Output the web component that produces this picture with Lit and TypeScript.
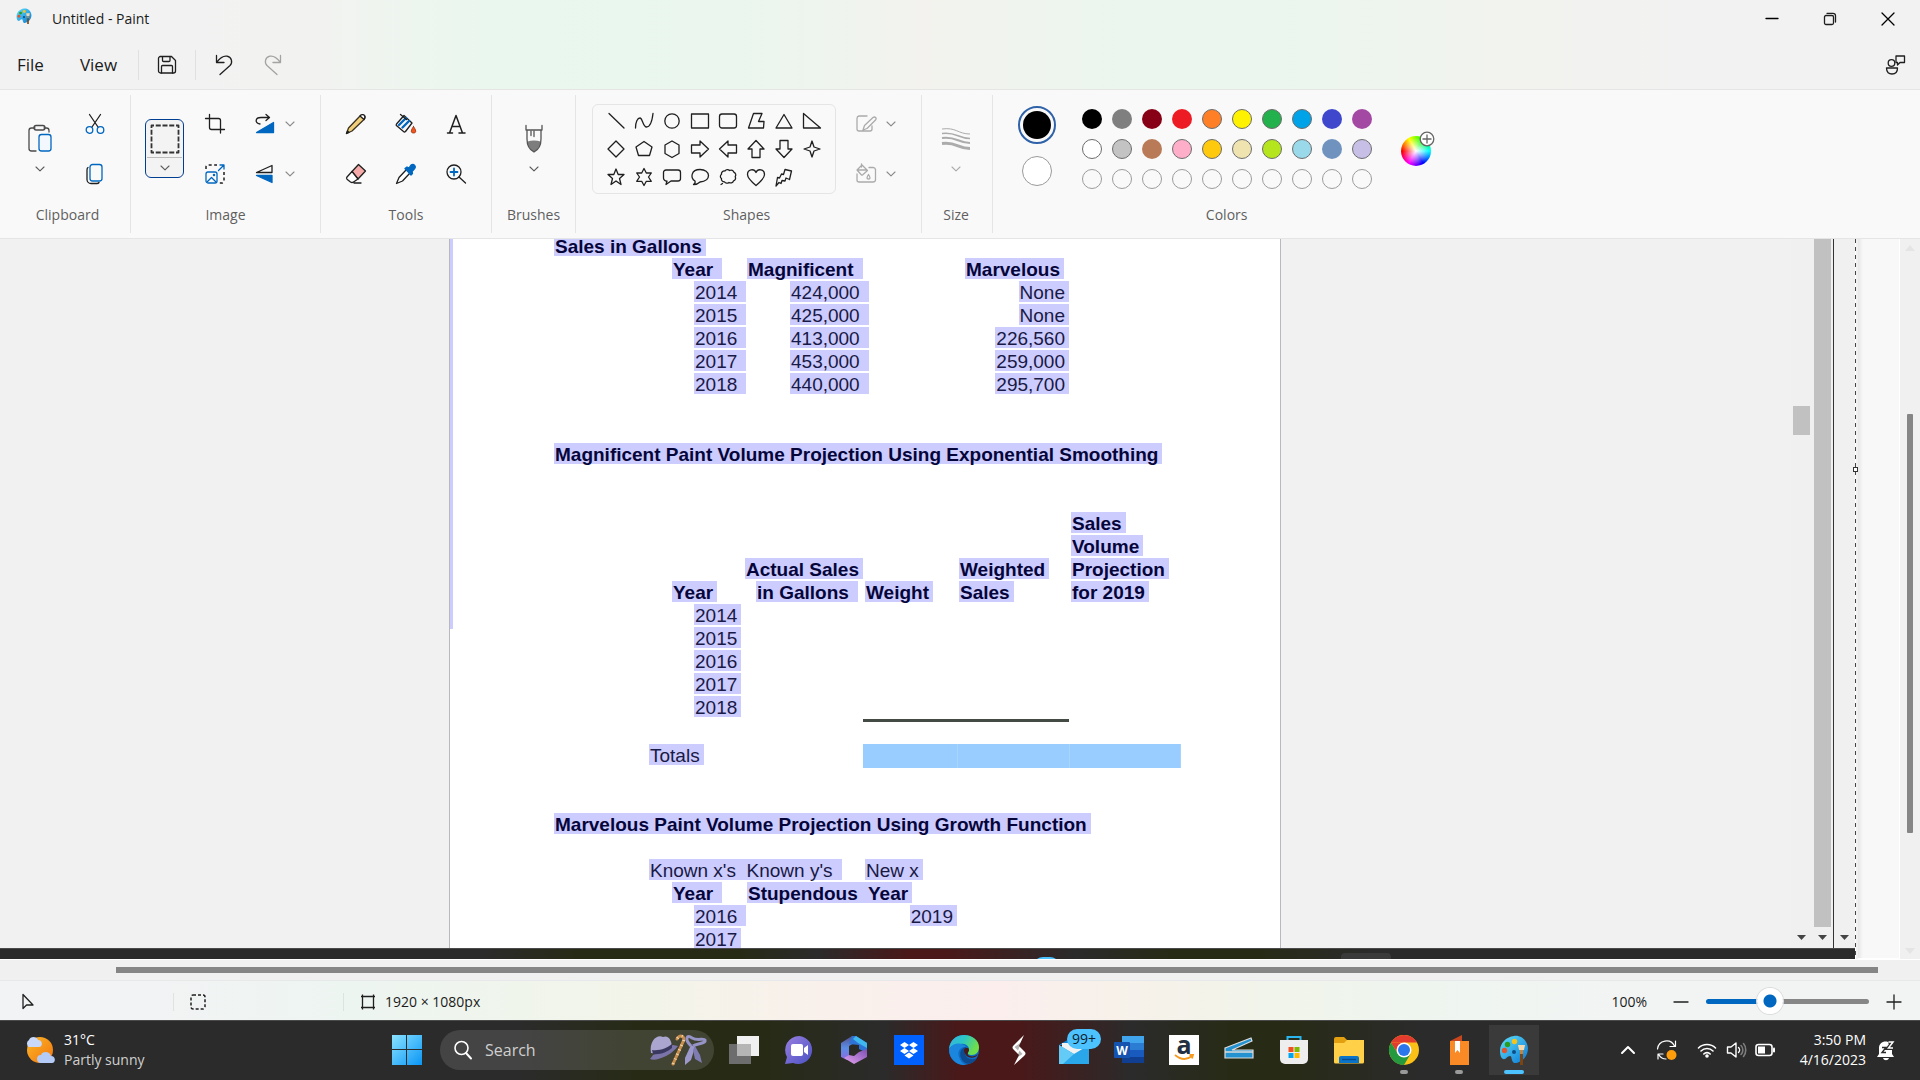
import { LitElement, html, css, svg, nothing, TemplateResult } from "lit";
import { customElement, state } from "lit/decorators.js";
import { classMap } from "lit/directives/class-map.js";
import { styleMap } from "lit/directives/style-map.js";

const INK = "#1f1f1f";
const BLUE = "#0067c0";

const icon = (w: number, h: number, body: unknown) => html`<svg
  width=${w}
  height=${h}
  viewBox="0 0 ${w} ${h}"
  fill="none"
  stroke=${INK}
  stroke-width="1.3"
  stroke-linecap="round"
  stroke-linejoin="round"
  aria-hidden="true"
>${body}</svg>`;

const chevron = (color = "#5c5c5c") =>
  icon(10, 6, svg`<path stroke=${color} stroke-width="1.1" d="M1 1l4 3.8L9 1"/>`);

const palette = (size: number) => html`<svg width=${size} height=${size} viewBox="0 0 30 30" aria-hidden="true">
  <defs><linearGradient id="pal" x1="0" y1="0" x2="1" y2="1"><stop offset="0" stop-color="#5fe0fb"/><stop offset="1" stop-color="#0a78d4"/></linearGradient></defs>
  <path fill="url(#pal)" d="M15 1C7 2 1 8 1 16c0 4 1 7 3 8 3 1 4-3 7-3 2 0 1 3 3 6 1 2 5 1 8-1 5-3 7-8 7-13C28 5 22 0 15 1z"/>
  <circle cx="8.500" cy="9.500" r="2.700" fill="#2a9d1f"/><circle cx="15.500" cy="6.500" r="2.700" fill="#f6c21c"/><circle cx="5.500" cy="15.500" r="2.700" fill="#e2552b"/><circle cx="15" cy="17" r="2" fill="#0b4f86"/>
  <path fill="#f4d9ae" d="M19 10h7l-1 5h-5z"/><path fill="#c9843a" d="M21 15h3v4h-3z"/><path fill="#7a4512" d="M21 19h3v11h-3z"/>
</svg>`;

const I = {
  minimize: icon(14, 14, svg`<path stroke="#000" d="M1 6.500h12"/>`),
  restore: icon(14, 14, svg`<rect x="1.500" y="3.500" width="9" height="9" rx="1.500"/><path d="M4 1.300h6a2.500 2.500 0 0 1 2.500 2.500V10"/>`),
  close: icon(14, 14, svg`<path stroke="#000" d="M1 1l12 12M13 1L1 13"/>`),
  save: icon(20, 20, svg`<path d="M3 1.500h11.500l4 4V16a2 2 0 0 1-2 2H3.500a2 2 0 0 1-2-2V3.500a2 2 0 0 1 2-2z"/><path d="M5.500 1.800v3.700a1 1 0 0 0 1 1h5.500a1 1 0 0 0 1-1V1.800M4.500 18v-6.500a1 1 0 0 1 1-1h9a1 1 0 0 1 1 1V18"/>`),
  undo: icon(20, 22, svg`<path d="M2.500 1.500v7H10M2.800 8.200C6 4 9.500 1.500 13 2.200c5 1 5.800 6.500 3 9.300L6 20.500"/>`),
  redo: icon(20, 22, svg`<path stroke="#a3a3a3" d="M17.500 1.500v7H10M17.200 8.200C14 4 10.500 1.500 7 2.200c-5 1-5.800 6.500-3 9.300L14 20.500"/>`),
  feedback: icon(22, 22, svg`<circle cx="7.500" cy="9" r="3.300"/><path d="M2.500 14h11c0 4.500-2.500 6-5.500 6s-5.500-1.500-5.500-6zM12 2h8.500v6.500H16L13.500 11V8.500H12z"/>`),
  paste: icon(26, 30, svg`<path stroke="#4a4a4a" d="M8 4H4.500A2.500 2.500 0 0 0 2 6.500v18A2.500 2.500 0 0 0 4.500 27H9M17 4h2.500A2.500 2.500 0 0 1 22 6.500V8"/><rect stroke="#4a4a4a" x="7" y="1.500" width="11" height="4.500" rx="2.200"/><rect x="12" y="10.500" width="12" height="16.500" rx="2.500" stroke=${BLUE} fill="#f2f8fd"/>`),
  cut: icon(20, 22, svg`<path d="M4.500 1.500l8.500 12.500M15.500 1.500L7 14"/><circle cx="4.500" cy="17" r="3.300" stroke=${BLUE}/><circle cx="15.500" cy="17" r="3.300" stroke=${BLUE}/>`),
  copy: icon(20, 22, svg`<path d="M3 4.500c-1 .5-1 1.200-1 2.500v9.500a4 4 0 0 0 4 4h6c1 0 1.500-.3 2-1"/><rect x="5" y="1.500" width="12" height="16.500" rx="2.500" stroke=${BLUE}/>`),
  select: icon(30, 30, svg`<rect x="1.500" y="1.500" width="27" height="27" stroke="#333" stroke-width="1.800" stroke-dasharray="5 1.750" stroke-linecap="butt" stroke-dashoffset="2.500"/>`),
  crop: icon(22, 22, svg`<path d="M1.500 5.500h13a2 2 0 0 1 2 2V20M5.500 1.500v13a2 2 0 0 0 2 2h13"/>`),
  resize: icon(22, 22, svg`<path stroke-width="1.500" stroke-dasharray="3 2.500" stroke-linecap="butt" d="M2 6V4a2 2 0 0 1 2-2h9M20 9v9a2 2 0 0 1-2 2h-3"/><g stroke=${BLUE}><rect x="2" y="9" width="11" height="11" rx="2"/><path d="M3.500 18.500l4-4 4 4M14.500 7.500L20 2M16 2h4v4"/><circle cx="10" cy="12" r=".6"/></g>`),
  rotate: icon(22, 22, svg`<path d="M6 11C.5 10 1 4.500 7 4.500h8M12 1.500l3.500 3L12 7.500"/><path fill=${BLUE} stroke=${BLUE} d="M2.500 19.500h17V9.500z"/>`),
  flip: icon(22, 22, svg`<path d="M2.500 9.500l15.500-7v7z"/><path fill=${BLUE} stroke=${BLUE} d="M2.500 12.500H18v7z"/>`),
  pencil: icon(22, 22, svg`<path fill="#f2cf7b" stroke="#3b3320" d="M1.500 20.500L3.500 15 15 3c3-3.500 6.500 0 4 3.500L7 18z"/><path fill="#fff" d="M15 3c3-3.500 6.500 0 4 3.500z"/><path d="M1.500 20.500l1-2.500 1.500 1.500z" fill=${INK}/>`),
  fill: icon(22, 22, svg`<path d="M1.500 11L9 2.500l8 7.500-6.500 8.500a1.500 1.500 0 0 1-2 0L2 13a1.500 1.500 0 0 1-.5-2z"/><path stroke=${BLUE} stroke-width="2.400" d="M4 12l7-7M7.500 14.500L14 8"/><path d="M5.500 1.500l6 5"/><path fill="#f7541c" stroke="#8c3212" stroke-width=".8" d="M18.500 13.500c3 4 3 6.500 0 6.500s-3-2.500 0-6.500z"/>`),
  text: icon(22, 22, svg`<path d="M2.500 20h5M14 20h6M4.500 20L11 2.500 17.500 20M7 13.500h8" stroke-width="1.500"/>`),
  eraser: icon(22, 22, svg`<path fill="#f5a9a9" d="M7 8.500l6.500-7 7 6.500-7.500 8z"/><path fill="#fff" d="M7 8.500l-5 5.500c-.8 1-.6 1.500 0 2.200L5.500 19c1 .7 2 .7 3 0L13 16zM9 20h7"/>`),
  picker: icon(22, 22, svg`<path d="M11.500 6.500L4 14.500l-2.500 6L7.500 18l7.500-8" fill="#fff"/><path fill=${BLUE} stroke=${BLUE} d="M10 5.500l2-1.500 2 1 2-3c3-1.800 5.500 1.500 3.500 3.800L17 8.500l.5 2-1.500 1.500z"/>`),
  zoom: icon(22, 22, svg`<circle cx="9" cy="9" r="7"/><path d="M14 14l6.500 6"/><path stroke=${BLUE} stroke-width="1.800" d="M9 5.500v7M5.500 9h7"/>`),
  brush: icon(20, 30, svg`<path stroke="none" fill="#7d7d7d" d="M3.500 17.500c4-1.500 9-1.500 13 0-.5 4.500-3 8.500-6.500 10.800-3.500-2.300-6-6.300-6.500-10.800z"/><path stroke="#555" d="M2 1.500v4.500h16V1.500M3 6v9c0 6 3 11 7 13 4-2 7-7 7-13V6"/><path stroke="#555" d="M7 7v4.500M10 7v5.500"/>`),
  outline: icon(22, 20, svg`<g stroke="#ababab"><path d="M12 2H4a2.500 2.500 0 0 0-2 2.500V15a2 2 0 0 0 2 2h11a2 2 0 0 0 2-2v-3M8 16l1.500-4.500L18 3.500c2-1.500 4 .8 2.500 2.500L12 14.500z"/></g>`),
  fillShape: icon(22, 22, svg`<g stroke="#ababab"><path d="M2 11v6a2 2 0 0 0 2 2h14a2.500 2.500 0 0 0 2.500-2.500v-10a2.500 2.500 0 0 0-2.500-2h-4M2 7l5-5 5.500 5.500-5 4.500a1 1 0 0 1-1 0zM2 7h10M6.500 1v3"/><path d="M13.500 11.500c2 3 2 4.500 0 4.500s-2-1.500 0-4.500z"/></g>`),
  size: icon(30, 26, svg`<g stroke="#ababab" stroke-linecap="butt"><path stroke-width="1" d="M1 3c14-2 16 5 28 5"/><path stroke-width="1.500" d="M1 7.500c14-2 16 5 28 5"/><path stroke-width="2" d="M1 12c14-2 16 5 28 5"/><path stroke-width="3" d="M1 17.500c14-2 16 5 28 5"/></g>`),
};

const SHAPES: [string, TemplateResult][] = [
  ["Line", svg`<path d="M3 2.500L18 17"/>`],
  ["Curve", svg`<path d="M1.500 17c0-6 2-10 4.500-10s3 9 6.500 9 5.500-5 6.500-13.500"/>`],
  ["Oval", svg`<circle cx="10" cy="10" r="7.200"/>`],
  ["Rectangle", svg`<path d="M1.500 3h17v14h-17z"/>`],
  ["Rounded rectangle", svg`<rect x="1.500" y="3" width="17" height="14" rx="2.500"/>`],
  ["Polygon", svg`<path d="M7.500 2.500h8.500l-3.500 8H18l-.5 6.500H2.500z"/>`],
  ["Triangle", svg`<path d="M10 3.500l8 13.500H2z"/>`],
  ["Right triangle", svg`<path d="M1.500 2.500V17h17z"/>`],
  ["Diamond", svg`<path d="M10 2l8 8-8 8-8-8z"/>`],
  ["Pentagon", svg`<path d="M10 2.500l8 5.500-2.500 8.500h-11L2 8z"/>`],
  ["Hexagon", svg`<path d="M10 2l7 4v8.500l-7 4-7-4V6z"/>`],
  ["Right arrow", svg`<path d="M1.500 6H10V2l8.500 8-8.500 8v-4H1.500z"/>`],
  ["Left arrow", svg`<path d="M18.500 6H10V2l-8.500 8 8.500 8v-4h8.500z"/>`],
  ["Up arrow", svg`<path d="M6 18.500V10H2l8-8.500 8 8.500h-4v8.500z"/>`],
  ["Down arrow", svg`<path d="M6 1.500V10H2l8 8.500 8-8.500h-4V1.500z"/>`],
  ["Four-point star", svg`<path d="M10 2l2 6 6 2-6 2-2 6-2-6-6-2 6-2z"/>`],
  ["Five-point star", svg`<path d="M10 2l2.200 5.500H18l-4.500 4 1.500 6-5-3.500-5 3.500 1.500-6-4.500-4h5.800z"/>`],
  ["Six-point star", svg`<path d="M10 1.500l2.300 4.500h5L14.500 10l2.800 4.300h-5L10 18.500l-2.300-4.200h-5L5.500 10 2.700 6h5z"/>`],
  ["Rounded callout", svg`<path d="M4 3h12a2.500 2.500 0 0 1 2.500 2.500v6a2.500 2.500 0 0 1-2.500 2.500H9l-5 3.500 1-3.500a3 3 0 0 1-3.500-3V5.500A2.500 2.500 0 0 1 4 3z"/>`],
  ["Oval callout", svg`<path d="M10 2.500c5 0 8.500 2.500 8.500 6S15 14.500 10 15c-2 2-4 2.500-6.500 2.500 1.500-1 2-2 1.500-3.500-5-3-4-11.500 5-11.500z"/>`],
  ["Cloud callout", svg`<path d="M7 4c1-1.800 3.500-1.800 4.500-.5 2-1 4 0 4.300 1.700 2 .8 2.500 3 1.400 4.500 1 1.800 0 3.800-1.700 4.200-.8 2-3 2.600-4.500 1.500-1.500 1.200-3.500 1-4.500-.5-2 0-3.500-1.500-3-3.400-1.500-1-1.500-3.200 0-4.200C3 5.500 5 3.500 7 4zM4.500 16.500l-1.500 1"/>`],
  ["Heart", svg`<path d="M10 18.500C4 13.500 1.500 10.500 1.500 7.500c0-5 6.500-6.500 8.500-2 2-4.500 8.500-3 8.500 2 0 3-2.500 6-8.500 11z"/>`],
  ["Lightning", svg`<path d="M11 2.500l6.500 1.500-2 8.500-3.500-1.500-1 3-3-.5-1 3-2-1L2 19l1.500-8.500 2 .5L7.500 7l2 .5z"/>`],
];

const COLORS = [
  ["#000000", "#7f7f7f", "#880015", "#ed1c24", "#ff7f27", "#fff200", "#22b14c", "#00a2e8", "#3f48cc", "#a349a4"],
  ["#ffffff", "#c3c3c3", "#b97a57", "#ffaec9", "#ffc90e", "#efe4b0", "#b5e61d", "#99d9ea", "#7092be", "#c8bfe7"],
];
const RIMLESS = new Set(["#000000", "#7f7f7f", "#880015", "#ed1c24", "#3f48cc", "#a349a4", "#b97a57", "#7092be"]);

const SALES = [
  ["2014", "424,000", "None"],
  ["2015", "425,000", "None"],
  ["2016", "413,000", "226,560"],
  ["2017", "453,000", "259,000"],
  ["2018", "440,000", "295,700"],
];

const hl = (text: string, wide = false) => html`<span class=${classMap({ hl: true, wide })}>${text}</span>`;

@customElement("paint-document")
class PaintDocument extends LitElement {
  static styles = css`
    :host {
      display: block;
      position: relative;
      box-sizing: border-box;
      width: 832px;
      padding-left: 104px;
      background: #fff;
      border: solid #b9b9bd;
      border-width: 0 1px;
      font-family: "Liberation Sans", Arial, sans-serif;
      font-size: 19px;
      color: #191945;
      overflow: hidden;
    }
    .stripe {
      position: absolute;
      left: 0;
      top: 0;
      width: 3px;
      height: 390px;
      background: #ccccff;
    }
    .sheet { margin-top: -4px; }
    .hl {
      display: inline-block;
      vertical-align: top;
      height: 21px;
      line-height: 24px;
      padding: 0 4px 0 1px;
      background: #ccccff;
      white-space: pre;
    }
    .wide { padding-right: 9px; }
    h2 {
      margin: 0;
      height: 23px;
      font-size: 19px;
      line-height: 23px;
      color: #05053a;
    }
    table {
      border-collapse: collapse;
      table-layout: fixed;
      width: 626px;
    }
    .c0 { width: 95px; }
    .c1 { width: 96px; }
    .c2 { width: 118px; }
    .c3 { width: 94px; }
    .c4 { width: 112px; }
    .c5 { width: 111px; }
    th, td { padding: 0; height: 23px; text-align: left; vertical-align: top; }
    th { color: #05053a; vertical-align: bottom; }
    th .hl { display: block; width: max-content; margin-bottom: 2px; }
    .year { padding-left: 23px; }
    .value { padding-left: 45px; }
    .inset { padding-left: 2px; }
    .mid .hl + .hl { margin-left: 11px; }
    .right { text-align: right; }
    .marv { padding-left: 8px; }
    .smoothing { margin-top: 47px; }
    .growth { margin-top: 45px; }
    .smoothing + table { margin-top: 46px; }
    .growth + table { margin-top: 23px; }
    .ruled td { height: 25px; }
    .ruled .line { box-shadow: inset 0 3px #444a44; }
    .totals td { height: 24px; }
    .sum { background: #99ccff; border-right: 1px solid #a9d4ff; }
  `;

  private cols = html`<colgroup><col class="c0" /><col class="c1" /><col class="c2" /><col class="c3" /><col class="c4" /><col class="c5" /></colgroup>`;

  render() {
    return html`
      <div class="stripe"></div>
      <div class="sheet">
        <h2>${hl("Sales in Gallons")}</h2>
        <table>
          ${this.cols}
          <tr><td></td><th class="year">${hl("Year", true)}</th><th class="inset">${hl("Magnificent", true)}</th><td></td><th class="marv">${hl("Marvelous")}</th><td></td></tr>
          ${SALES.map(
            ([y, a, b]) => html`<tr><td></td><td class="value">${hl(y, true)}</td><td class="value">${hl(a, true)}</td><td></td><td class="right">${hl(b)}</td><td></td></tr>`,
          )}
        </table>
        <h2 class="smoothing">${hl("Magnificent Paint Volume Projection Using Exponential Smoothing")}</h2>
        <table>
          ${this.cols}
          <tr>
            <td></td>
            <th class="year">${hl("Year")}</th>
            <th class="mid">${hl("Actual Sales")}${hl("in Gallons", true)}</th>
            <th class="inset">${hl("Weight")}</th>
            <th class="inset">${hl("Weighted")}${hl("Sales")}</th>
            <th class="inset">${hl("Sales")}${hl("Volume")}${hl("Projection")}${hl("for 2019")}</th>
          </tr>
          ${SALES.map(([y]) => html`<tr><td></td><td class="value">${hl(y)}</td><td colspan="4"></td></tr>`)}
          <tr class="ruled"><td colspan="3"></td><td class="line" colspan="2"></td><td></td></tr>
          <tr class="totals"><td></td><td>${hl("Totals")}</td><td></td><td class="sum"></td><td class="sum"></td><td class="sum"></td></tr>
        </table>
        <h2 class="growth">${hl("Marvelous Paint Volume Projection Using Growth Function")}</h2>
        <table>
          ${this.cols}
          <tr><td></td><td colspan="2">${hl("Known x's  Known y's", true)}</td><td class="inset">${hl("New x")}</td><td></td><td></td></tr>
          <tr><td></td><th class="year">${hl("Year", true)}</th><th class="inset" colspan="2">${hl("Stupendous  Year")}</th><td></td><td></td></tr>
          <tr><td></td><td class="value">${hl("2016", true)}</td><td></td><td class="right">${hl("2019")}</td><td></td><td></td></tr>
          <tr><td></td><td class="value">${hl("2017")}</td><td colspan="4"></td></tr>
        </table>
      </div>
    `;
  }
}

@customElement("paint-ribbon")
class PaintRibbon extends LitElement {
  static styles = css`
    :host {
      display: flex;
      height: 148px;
      background: #f9f9f9;
      border: solid #e5e5e5;
      border-width: 1px 0;
      font: 14px/20px "Open Sans", "Noto Sans", sans-serif;
      color: #5f5f5f;
    }
    button { font: inherit; padding: 0; border: 0; background: none; display: grid; place-items: center; }
    svg { display: block; }
    section { padding: 9px 10px 0; }
    section + section { background: linear-gradient(#e5e5e5, #e5e5e5) 0 5px / 1px 138px no-repeat; padding-left: 11px; }
    .body { display: flex; height: 100px; justify-content: center; align-items: flex-start; }
    h3 { margin: 6px 0 0; font-size: 14px; font-weight: 400; text-align: center; line-height: 20px; }
    section.clip { padding: 9px 10px 0 15px; }
    .clip .body { gap: 5px; }
    .cells { display: grid; grid-template-columns: repeat(var(--n, 1), 50px); grid-auto-rows: 50px; }
    .cells button { width: 50px; height: 50px; }
    .three { --n: 3; }
    .big { width: 50px; height: 80px; grid-template-rows: 40px 20px; padding: 20px 0 0; }
    .split { display: grid; grid-template-columns: 30px 20px; grid-auto-rows: 50px; padding-left: 10px; }
    .split button { height: 50px; }
    .image .body { padding-right: 10px; }
    .selectBox {
      margin: 20px 6px 0 4px;
      width: 39px;
      height: 59px;
      box-sizing: border-box;
      border: 1px solid #003e92;
      border-radius: 6px;
      background: #f3f3f3;
      grid-template-rows: 37px 1px 19px;
    }
    .selectBox i { width: 35px; height: 1px; background: #bcbcbc; }
    .gallery {
      display: grid;
      grid-template-columns: repeat(8, 28px);
      grid-auto-rows: 28px;
      margin-top: 5px;
      padding: 2px 9px;
      border: 1px solid #e5e5e5;
      border-radius: 6px;
    }
    .shapes .split { padding-left: 15px; }
    section.shapes { padding: 9px 20px 0 17px; }
    section.size { padding: 9px 11px 0 10px; }
    section.brushes { padding: 9px 15px 0 16px; }
    section.colors { padding: 9px 20px 0 20px; }
    .current { display: grid; width: 50px; justify-items: center; padding-top: 7px; row-gap: 12px; }
    .current button { width: 30px; height: 30px; border-radius: 50%; background: #fff; border: 1px solid #9a9a9a; }
    .current .primary { width: 38px; height: 38px; border: 2px solid #2f62a8; padding: 3px; background: #000 content-box; }
    .swatches { display: grid; grid-template-columns: repeat(10, 30px); grid-auto-rows: 30px; place-items: center; margin: 5px 0 0 15px; }
    .swatch { width: 20px; height: 20px; border-radius: 50%; border: 1px solid #6d6d6d; }
    .rimless { border-color: transparent; background-clip: border-box; background-origin: border-box; }
    .empty { border-color: #9c9c9c; }
    .wheel { position: relative; width: 30px; height: 30px; margin: 37px 10px 0 24px; border-radius: 50%;
      background: radial-gradient(closest-side, #fff, #fff0 90%), conic-gradient(from 270deg, red, yellow, lime, cyan, blue, magenta, red); }
    .wheel svg { position: absolute; left: 18px; top: -5px; }
  `;

  private tool(name: string, art: TemplateResult) {
    return html`<button aria-label=${name}>${art}</button>`;
  }

  render() {
    return html`
      <section class="clip">
        <div class="body">
          <button class="big" aria-label="Paste">${I.paste}${chevron()}</button>
          <div class="cells">${this.tool("Cut", I.cut)}${this.tool("Copy", I.copy)}</div>
        </div>
        <h3>Clipboard</h3>
      </section>
      <section class="image">
        <div class="body">
          <button class="selectBox" aria-label="Select">${I.select}<i></i>${chevron()}</button>
          <div class="cells">${this.tool("Crop", I.crop)}${this.tool("Resize", I.resize)}</div>
          <div class="split">
            ${this.tool("Rotate", I.rotate)}${this.tool("Rotate options", chevron("#8a8a8a"))}
            ${this.tool("Flip", I.flip)}${this.tool("Flip options", chevron("#8a8a8a"))}
          </div>
        </div>
        <h3>Image</h3>
      </section>
      <section>
        <div class="body">
          <div class="cells three">
            ${this.tool("Pencil", I.pencil)}${this.tool("Fill", I.fill)}${this.tool("Text", I.text)}
            ${this.tool("Eraser", I.eraser)}${this.tool("Color picker", I.picker)}${this.tool("Magnifier", I.zoom)}
          </div>
        </div>
        <h3>Tools</h3>
      </section>
      <section class="brushes">
        <div class="body"><button class="big" aria-label="Brushes">${I.brush}${chevron()}</button></div>
        <h3>Brushes</h3>
      </section>
      <section class="shapes">
        <div class="body">
          <div class="gallery">${SHAPES.map(([name, art]) => this.tool(name, icon(20, 20, art)))}</div>
          <div class="split">
            ${this.tool("Outline", I.outline)}${this.tool("Outline options", chevron("#8a8a8a"))}
            ${this.tool("Shape fill", I.fillShape)}${this.tool("Shape fill options", chevron("#8a8a8a"))}
          </div>
        </div>
        <h3>Shapes</h3>
      </section>
      <section class="size">
        <div class="body"><button class="big" aria-label="Size">${I.size}${chevron("#ababab")}</button></div>
        <h3>Size</h3>
      </section>
      <section class="colors">
        <div class="body">
          <div class="current">
            <button class="primary" aria-label="Color 1"></button>
            <button aria-label="Color 2"></button>
          </div>
          <div class="swatches">
            ${COLORS.flat().map(
              (c) => html`<button
                class=${classMap({ swatch: true, rimless: RIMLESS.has(c) })}
                style=${styleMap({ backgroundColor: c })}
                aria-label=${c}
              ></button>`,
            )}
            ${Array.from({ length: 10 }, () => html`<button class="swatch empty" aria-label="Empty color"></button>`)}
          </div>
          <button class="wheel" aria-label="Edit colors">
            ${icon(16, 16, svg`<circle cx="8" cy="8" r="6.800" fill="#fff" stroke="#666"/><path stroke="#666" stroke-linecap="butt" d="M8 3.500v9M3.500 8h9"/>`)}
          </button>
        </div>
        <h3>Colors</h3>
      </section>
    `;
  }
}

const fluent = (body: unknown) => html`<svg width="30" height="30" viewBox="0 0 30 30" aria-hidden="true">${body}</svg>`;

const APPS: { name: string; art: TemplateResult; badge?: string; running?: boolean; active?: boolean }[] = [
  { name: "Task view", art: fluent(svg`<path fill="#6d6d6d" d="M0 9h22v20H0z"/><path fill="#f0f0f0" d="M8 1h22v20H8z"/><path fill="#b5b5b5" d="M8 9h14v12H8z"/>`) },
  { name: "Chat", art: fluent(svg`<defs><linearGradient id="chat" x1="0" y1="0" x2="1" y2="1"><stop offset="0" stop-color="#9a7fe0"/><stop offset="1" stop-color="#4a51c4"/></linearGradient></defs><path fill="url(#chat)" d="M15 1a14 14 0 1 1-6 27l-8 1 2-7A14 14 0 0 1 15 1z"/><rect x="7" y="9" width="12" height="12" rx="2" fill="#fff"/><path fill="#fff" d="M20 13l4-3v10l-4-3z"/>`) },
  { name: "Microsoft 365", art: fluent(svg`<defs><linearGradient id="ma" x1="0" y1="0" x2="0" y2="1"><stop offset="0" stop-color="#54518f"/><stop offset=".5" stop-color="#5a8de6"/><stop offset="1" stop-color="#8f6ae0"/></linearGradient><linearGradient id="mb" x1="0" y1="1" x2="1" y2="0"><stop offset="0" stop-color="#e6a3ef"/><stop offset="1" stop-color="#7c4fb3"/></linearGradient></defs><path fill="url(#ma)" d="M13 1L2 8v14l6 3 2-4V11l7-4z"/><path fill="#2d74d6" d="M13 1l4 0 11 7v10l-8-4v-4L10 9z"/><path fill="#3eb8ef" d="M17 1l11 7v5l-9-5-5-4z"/><path fill="url(#mb)" d="M28 14v8l-13 7-10-6 5-3 5 1 5-4z"/>`) },
  { name: "Dropbox", art: fluent(svg`<path fill="#0061ff" d="M0 0h30v30H0z"/><path fill="#fff" d="M10.500 7l4.500 3-4.500 3L6 10zM19.500 7l4.500 3-4.500 3-4.500-3zM10.500 13l4.500 3-4.500 3L6 16zM19.500 13l4.500 3-4.500 3-4.500-3zM15 17.500l4.500 3L15 23.500l-4.500-3z"/>`) },
  { name: "Edge", art: fluent(svg`<defs><linearGradient id="ed" x1="0" y1="0" x2="1" y2=".4"><stop offset="0" stop-color="#35b0e8"/><stop offset=".5" stop-color="#2cc6c4"/><stop offset="1" stop-color="#6fe04a"/></linearGradient></defs><circle cx="15" cy="15" r="15" fill="#0f6cc4"/><path fill="url(#ed)" d="M0 14C1 5 7 0 15 0c9 0 15 6 15 12 0 5-3 8-7 8-3 0-5-1-4-3 3-5-2-9-7-8-5 0-10 2-12 5z"/><path fill="#1a86dd" d="M0 14c4-7 14-7 17-2-6-1-9 5-7 10 1 4 4 7 7 8C8 31 0 24 0 14z"/><path fill="#0e4a8f" d="M17 12c-5 1-7 6-5 11 2 5 7 7 11 5 2-1 4-3 5-5-6 3-11 0-12-4-.5-3 1-4 1-7z"/><path fill="#4a1a1b" d="M15 15c1-3 5-3 5 0 0 2-2 3-1 5 2 2 7 2 10-1-2 5-13 6-14-4z"/>`) },
  { name: "Shortcut", art: fluent(svg`<path fill="#fff" d="M20 0L10 10c-2 2-2 3 0 5l5 5-5 10 10-9c2-2 2-3 0-5l-5-5z"/><path fill="#2b2b2b" d="M17.500 7L10.500 12l3.500 3.500zM12.500 23l6-4-3-3.500z" opacity=".35"/>`) },
  { name: "Mail", badge: "99+", art: fluent(svg`<path fill="#1382d4" d="M0 10L15 1l15 9z"/><path fill="#f1f1f1" d="M3 8h24v12H3z"/><path fill="#2aa6ea" d="M0 10l15 9 15-9v19H0z"/><path fill="#63cbf6" d="M0 10l15 9L4 29H0z"/>`) },
  { name: "Word", art: fluent(svg`<path fill="#41a5ee" d="M8 1h22v8H8z"/><path fill="#2b7cd3" d="M8 8h22v7H8z"/><path fill="#185abd" d="M8 15h22v7H8z"/><path fill="#103f91" d="M8 22h22v6H8z"/><rect x="0" y="7" width="16" height="16" rx="1" fill="#1553b0"/><text x="8" y="19.500" text-anchor="middle" fill="#fff" font-family="Open Sans, sans-serif" font-weight="700" font-size="12">W</text>`) },
  { name: "Amazon", art: fluent(svg`<path fill="#fff" d="M0 0h30v30H0z"/><text x="15" y="19" text-anchor="middle" fill="#232f3e" font-family="Open Sans, sans-serif" font-weight="700" font-size="25">a</text><path fill="none" stroke="#f7991c" stroke-width="1.800" d="M6 20c6 5 12 5 17 1M20.500 20h3.500l-1 3.500"/>`) },
  { name: "Scanner", art: fluent(svg`<path fill="#2492d0" stroke="#ddd" stroke-width="1.200" d="M1 13L27 3l1 3-20 9h21v8H1z"/><path stroke="#ddd" stroke-width="1.500" d="M1 17h28"/>`) },
  { name: "Store", art: fluent(svg`<path fill="none" stroke="#2bb5ef" stroke-width="2" d="M8.500 7V2h13v5"/><path fill="#eee" d="M1 5h28v19a5 5 0 0 1-5 5H6a5 5 0 0 1-5-5z"/><path fill="#f25022" d="M9.500 12H14.500v5h-5z"/><path fill="#7fba00" d="M15.500 12h5v5h-5z"/><path fill="#00a4ef" d="M9.500 18h5v5h-5z"/><path fill="#ffb900" d="M15.500 18h5v5h-5z"/>`) },
  { name: "Files", art: fluent(svg`<path fill="#e2a010" d="M0 4a2 2 0 0 1 2-2h8l4 4v6H0z"/><path fill="#ffd048" d="M0 8h10l3-3h17v22a1.500 1.500 0 0 1-1.500 1.500H1.500A1.500 1.500 0 0 1 0 27z"/><path fill="#0a74c9" d="M5 28v-5a2 2 0 0 1 2-2h16a2 2 0 0 1 2 2v5z"/><path stroke="#064c8c" stroke-width="1.300" d="M8 24.500h14"/>`) },
  { name: "Chrome", running: true, art: fluent(svg`<circle cx="15" cy="15" r="15" fill="#fbc116"/><path fill="#e33b2e" d="M2 7.500A15 15 0 0 1 28 7.500H15z"/><path fill="#e33b2e" d="M2 7.500L9 19l6-11.500z"/><path fill="#24993e" d="M2 7.500A15 15 0 0 0 15 30l6.500-11L9 19z"/><circle cx="15" cy="15" r="7.500" fill="#fff"/><circle cx="15" cy="15" r="6" fill="#2a76ea"/>`) },
  { name: "Reader", running: true, art: fluent(svg`<path fill="#c8461e" d="M6 6L18 0v7H6z"/><path fill="#f98a26" d="M6 6h19v24H6z"/><path fill="#fff" d="M11 6h5v12l-2.500-3-2.500 3z"/>`) },
  { name: "Paint", running: true, active: true, art: palette(30) },
];

@customElement("task-bar")
class TaskBar extends LitElement {
  static styles = css`
    :host {
      display: grid;
      grid-template-columns: 1fr auto 1fr;
      height: 60px;
      color: #fff;
      font: 14px/20px "Open Sans", "Noto Sans", sans-serif;
      background: linear-gradient(90deg, #2b2b2b 27%, #272b16 33%, #272b16 40%, #2b2b2b 46%, #4a1819 50%, #4a1819 53%, #2b2b2b 59%, #272b16 64%, #272b16 67%, #2b2b2b 74%);
      box-shadow: inset 0 1px #4a4a4a;
    }
    button { font: inherit; color: inherit; padding: 0; border: 0; background: none; }
    svg { display: block; overflow: visible; }
    .weather { display: flex; align-items: center; gap: 8px; padding-left: 25px; text-align: left; }
    .weather small, .clock { font-size: 14px; line-height: 20px; display: block; }
    .weather em { font-style: normal; color: #d0d0d0; }
    .middle { display: flex; align-items: center; }
    .app { position: relative; width: 55px; height: 60px; display: grid; place-items: center; }
    .active { background: linear-gradient(#3a3a3a, #3a3a3a) center / 50px 50px no-repeat; }
    .mark { position: absolute; left: 24px; bottom: 6px; width: 8px; height: 4px; border-radius: 2px; background: #9a9a9a; }
    .active .mark { left: 18px; width: 20px; background: #4cc2ff; }
    .badge { position: absolute; left: 21px; top: 9px; height: 20px; padding: 0 5px; border-radius: 10px; background: #4cc2ff; color: #10202a; line-height: 20px; }
    .search { display: flex; align-items: center; gap: 13px; box-sizing: border-box; width: 274px; height: 40px; margin: 0 2px 0 6px; padding: 0 7px 0 14px; border-radius: 20px; background: #ffffff1f; }
    input { flex: 1; min-width: 0; border: 0; padding: 0; background: none; font: 16px/24px "Open Sans", "Noto Sans", sans-serif; color: #fff; outline: 0; }
    input::placeholder { color: #cfcfcf; opacity: 1; }
    .tray { display: flex; align-items: center; justify-content: flex-end; padding-right: 24px; }
    .tray svg { flex: none; }
    .chev { margin-right: 20px; }
    .sync { margin-right: 19px; }
    .status { display: flex; align-items: center; gap: 9px; margin-right: 25px; }
    .clock { text-align: right; margin-right: 10px; }
  `;

  private line = (w: number, h: number, body: unknown) => html`<svg width=${w} height=${h} viewBox="0 0 ${w} ${h}" fill="none" stroke="#fff" stroke-width="1.600" stroke-linecap="round" stroke-linejoin="round" aria-hidden="true">${body}</svg>`;

  render() {
    return html`
      <button class="weather" aria-label="Weather">
        <svg width="31" height="30" viewBox="0 0 31 30" aria-hidden="true">
          <defs><linearGradient id="sun" x1="0" y1="0" x2="1" y2="1"><stop offset="0" stop-color="#fbb829"/><stop offset="1" stop-color="#f2740d"/></linearGradient></defs>
          <circle cx="15" cy="15" r="13" fill="url(#sun)"/>
          <path fill="#c9d9fb" d="M4 12a4 4 0 0 1 0-7c1-4 8-4 9 0 5 0 5 7 1 7z"/>
          <path fill="#b4cbf8" d="M16 28a4 4 0 0 1 0-8c1-4 9-4 10 1 5 0 5 7 1 7z"/>
        </svg>
        <span><small>31°C</small><small><em>Partly sunny</em></small></span>
      </button>
      <div class="middle">
        <button class="app" aria-label="Start">
          <svg width="30" height="30" viewBox="0 0 30 30" aria-hidden="true"><defs><linearGradient id="win" x1="0" y1="0" x2="30" y2="30" gradientUnits="userSpaceOnUse"><stop offset="0" stop-color="#8ae3ff"/><stop offset="1" stop-color="#0a95f5"/></linearGradient></defs><path fill="url(#win)" d="M0 0h14v14H0zM15 0h15v14H15zM0 15h14v15H0zM15 15h15v15H15z"/></svg>
        </button>
        <div class="search">
          ${this.line(18, 20, svg`<circle cx="7.500" cy="8" r="6.500"/><path stroke-width="2" d="M12 13l5 5.500"/>`)}
          <input type="text" aria-label="Search" placeholder="Search" />
          <svg width="58" height="34" viewBox="0 0 58 34" aria-hidden="true">
            <path fill="#7a74a8" d="M1 26c6 3 22-4 28-13l-5-1L4 22z"/><path fill="#aaa6d0" d="M2 20C0 8 8 1 14 4c5-2 8 2 9 9-4 5-12 8-21 7z"/><path fill="#3b3860" d="M3 17c8 1 15-2 20-6v4c-5 4-12 7-19 6z"/>
            <path fill="none" stroke="#c98d4d" stroke-width="3" stroke-linecap="round" d="M24 31L34 9c3-6-3-8-6-3"/><path stroke="#f3d6ac" stroke-width="3" stroke-dasharray="1 4" fill="none" d="M24 31L34 9c3-6-3-8-6-3"/>
            <path fill="none" stroke="#9693c6" stroke-width="3" d="M42 13C35 6 38 1 43 5c5 3 12 0 13 2 1 4-8 3-12 6"/><path fill="#9c98cb" d="M42 12l4 2-4 13-6 5v-7z"/><path fill="#7f7bb3" d="M46 13l5 9 2 8-7-4-2-9z"/>
          </svg>
        </div>
        ${APPS.map(
          (a) => html`<button class=${classMap({ app: true, active: !!a.active })} aria-label=${a.name}>
            ${a.art}${a.badge ? html`<span class="badge">${a.badge}</span>` : nothing}${a.running ? html`<span class="mark"></span>` : nothing}
          </button>`,
        )}
      </div>
      <div class="tray">
        <button class="chev" aria-label="Show hidden icons">${this.line(16, 10, svg`<path stroke-width="2" d="M2 8l6-6 6 6"/>`)}</button>
        <button class="sync" aria-label="Updates">${this.line(22, 22, svg`<path stroke-width="1.200" d="M1.500 10a9 9 0 0 1 17-3M19.500 2v5.500H14M2 20v-5h5M3 16c1.500 2.500 4 4 7 4"/><circle cx="15.500" cy="16" r="5" fill="#ff9d0a" stroke="none"/>`)}</button>
        <button class="status" aria-label="Network, sound and battery">
          ${this.line(20, 16, svg`<path d="M1.500 6a12 12 0 0 1 17 0M4 9a8.500 8.500 0 0 1 12 0M6.800 12a4.500 4.500 0 0 1 6.400 0"/><circle cx="10" cy="14" r="1" fill="#fff"/>`)}
          ${this.line(20, 18, svg`<path stroke-width="1.400" d="M1.500 6H5l5-4v14l-5-4H1.500zM12.500 6.500c1.500 1.500 1.500 3.500 0 5"/><path stroke="#7d7d7d" d="M15 4.500c2.500 2.500 2.500 6.500 0 9M17.500 2.500c3 3.500 3 9.500 0 13"/>`)}
          ${this.line(20, 14, svg`<rect x="1" y="1.500" width="16" height="11" rx="2.500"/><path d="M19 5.500v3" stroke-width="2"/><path fill="#fff" stroke="none" d="M3 3.500h7v7H3z"/>`)}
        </button>
        <button class="clock" aria-label="Clock">3:50 PM<br />4/16/2023</button>
        <button aria-label="Notifications">
          <svg width="20" height="22" viewBox="0 0 20 22" aria-hidden="true"><path fill="#fff" d="M3 15V9c0-4 3-6.500 6.500-6.500S16 5 16 9v6l2 3H1zM7 19h6c-1 3-5 3-6 0z"/><path fill="none" stroke="#2b2b2b" stroke-width="1.400" d="M6 8.500h4l-4 5h4"/><path fill="none" stroke="#2b2b2b" stroke-width="4" d="M12.500 3h4.500l-4.500 6H17"/><path fill="none" stroke="#fff" stroke-width="1.500" d="M12.500 3h4.500l-4.500 6H17"/></svg>
        </button>
      </div>
    `;
  }
}

@customElement("app-root")
class AppRoot extends LitElement {
  @state() private zoom = 37;

  static styles = css`
    :host {
      display: flex;
      flex-direction: column;
      height: 100vh;
      overflow: hidden;
      font: 14px/20px "Open Sans", "Noto Sans", sans-serif;
      color: #1b1b1b;
      background: #f0f0f0;
    }
    button { font: inherit; color: inherit; padding: 0; border: 0; background: none; }
    svg { display: block; }
    .chrome { background: linear-gradient(90deg, #f2f2f2 10%, #f2f3f0 17%, #e9f7ee 26%, #eaf6ee 38%, #f3f2ee 48%, #f0f4ee 53%, #eaf6ee 59%, #eaf6ee 66%, #f2f3ee 78%, #f2f2f2 88%); }
    .title { display: flex; align-items: center; height: 38px; padding: 0 25px 0 16px; gap: 20px; }
    .title h1 { flex: 1; margin: 0; font-size: 14px; font-weight: 400; line-height: 20px; }
    .title > svg { margin-top: -6px; }
    .title nav { display: flex; gap: 44px; }
    .menu { display: flex; align-items: center; height: 51px; padding: 2px 14px 0 17px; box-sizing: border-box; font-size: 17px; }
    .menu .view { margin-left: 36px; }
    .rule { width: 1px; background: #dfe1df; height: 30px; }
    .menu .rule { margin-left: 21px; }
    .menu .save { margin: 0 0 0 18px; }
    .menu .save + .rule { margin-left: 18px; }
    .menu .undo { margin-left: 18px; }
    .menu .redo { margin-left: 29px; }
    .menu .feedback { margin-left: auto; }
    .work { flex: 1; min-height: 0; display: grid; grid-template-columns: 1fr 3px 42px 20px; grid-template-rows: 1fr 21px; background: #f0f0f0; }
    .picture { position: relative; min-height: 0; min-width: 0; display: flex; flex-direction: column; overflow: hidden; background: #f1f1f1; }
    .view-port { flex: 1; min-height: 0; display: flex; }
    .lead { flex: 449 1 0; }
    .trail { flex: 510 1 0; }
    paint-document { flex: none; }
    .bar { display: flex; flex-direction: column; align-items: center; width: 21px; background: #f0f0f0; padding-bottom: 8px; }
    .bar i { width: 17px; background: #c1c1c1; }
    .bar svg { margin-top: auto; }
    .bar .short { height: 29px; margin-top: 167px; }
    .bar .long { flex: 1; margin-bottom: 8px; }
    .edge { border-left: 1px solid #333; }
    .strip { height: 11px; position: relative; background: linear-gradient(90deg, #2b2b2b 26%, #272b16 31%, #272b16 40%, #2b2b2b 44%, #4a1819 49%, #4a1819 51%, #2b2b2b 58%, #272b16 63%, #272b16 68%, #2b2b2b 74%); box-shadow: inset 0 1px #4a4a4a; overflow: hidden; }
    .blob { position: absolute; left: 55.7%; top: 9px; width: 27px; height: 20px; border-radius: 10px; background: #4cc2ff; }
    .tab { position: absolute; left: 72.3%; top: 5px; width: 50px; height: 20px; border-radius: 4px; background: #3a3a3a; }
    .dash { position: relative; background: repeating-linear-gradient(#444 0 4px, #fff 4px 8px) 0 0 / 1px 100% no-repeat; }
    .handle { position: absolute; left: -2px; top: 228px; width: 3px; height: 3px; border: 1px solid #333; background: #fff; }
    .off { background: linear-gradient(90deg, #e6e6e6, #f8f8f8 5px); border-right: 1px solid #fff; border-bottom: 1px solid #fff; box-sizing: border-box; }
    .vscroll { display: flex; flex-direction: column; align-items: center; justify-content: space-between; padding: 6px 0 26px; }
    .vscroll { grid-row: 1 / 3; grid-column: 4; }
    .vscroll i { width: 6px; height: 419px; background: #858585; border-radius: 1px; margin: 163px 0 auto; }
    .hscroll { grid-row: 2; grid-column: 1 / 4; padding: 7px 0 0 116px; border-top: 1px solid #fff; box-sizing: border-box; margin-right: 22px; }
    .hscroll { margin-right: -22px; padding-right: 44px; }
    .hscroll i { display: block; height: 6px; background: #858585; }
    .status { display: flex; align-items: center; height: 40px; padding: 2px 17px 0 20px; box-sizing: border-box; border-top: 1px solid #e6e8ea;
      background: linear-gradient(90deg, #f2f3f4 8%, #edf5f1 18%, #f0f5ec 27%, #f3f4e9 34%, #f9f0eb 43%, #fbeeed 52%, #f7f1ea 58%, #f1f4ea 66%, #eef5ef 74%, #f2f4f4 86%); }
    .status .rule { height: 18px; background: #dfe2e2; }
    .pos { width: 153px; }
    .sel { width: 154px; padding-left: 15px; box-sizing: content-box; }
    .dim { display: flex; align-items: center; gap: 8px; padding-left: 15px; flex: 1; }
    .pct { margin-right: 25px; }
    .slider { -webkit-appearance: none; appearance: none; width: 163px; height: 26px; margin: 0 16px; background: none; }
    .slider::-webkit-slider-runnable-track { height: 5px; border-radius: 3px; background: linear-gradient(90deg, #0067c0 38%, #868686 38%); }
    .slider::-webkit-slider-thumb { -webkit-appearance: none; width: 26px; height: 26px; margin-top: -11px; border-radius: 50%; background: radial-gradient(circle, #0067c0 6px, #fff 7px); box-shadow: 0 0 0 1px #dcdcdc; }
  `;

  private arrow = html`<svg width="9" height="5" viewBox="0 0 9 5" aria-hidden="true"><path fill="#444" d="M0 0h9L4.500 5z"/></svg>`;

  render() {
    return html`
      <header class="chrome">
        <div class="title">
          ${palette(16)}
          <h1>Untitled - Paint</h1>
          <nav>
            <button aria-label="Minimize">${I.minimize}</button>
            <button aria-label="Restore">${I.restore}</button>
            <button aria-label="Close">${I.close}</button>
          </nav>
        </div>
        <div class="menu">
          <button>File</button>
          <button class="view">View</button>
          <span class="rule"></span>
          <button class="save" aria-label="Save">${I.save}</button>
          <span class="rule"></span>
          <button class="undo" aria-label="Undo">${I.undo}</button>
          <button class="redo" aria-label="Redo" disabled>${I.redo}</button>
          <button class="feedback" aria-label="Feedback">${I.feedback}</button>
        </div>
      </header>
      <paint-ribbon></paint-ribbon>
      <main class="work">
        <div class="picture">
          <div class="view-port">
            <div class="lead"></div>
            <paint-document></paint-document>
            <div class="trail"></div>
            <div class="bar"><i class="short"></i>${this.arrow}</div>
            <div class="bar"><i class="long"></i>${this.arrow}</div>
            <div class="bar edge">${this.arrow}</div>
          </div>
          <div class="strip"><span class="blob"></span><span class="tab"></span></div>
        </div>
        <div class="dash"><span class="handle"></span></div>
        <div class="off"></div>
        <div class="hscroll"><i></i></div>
        <div class="vscroll">
          <svg width="10" height="6" viewBox="0 0 10 6" aria-hidden="true"><path fill="#e4e4e4" d="M0 6l5-6 5 6z"/></svg>
          <i></i>
          <svg width="10" height="6" viewBox="0 0 10 6" aria-hidden="true"><path fill="#e4e4e4" d="M0 0l5 6 5-6z"/></svg>
        </div>
      </main>
      <footer class="status">
        <span class="pos">${icon(16, 18, svg`<path d="M3 1.500v14l3.500-3.500H13z"/>`)}</span>
        <span class="rule"></span>
        <span class="sel">${icon(18, 18, svg`<rect x="2" y="2" width="14" height="14" rx="2" stroke-width="1.500" stroke-dasharray="3 2" stroke-linecap="butt"/>`)}</span>
        <span class="rule"></span>
        <span class="dim">${icon(18, 18, svg`<path stroke-linecap="butt" d="M3.500 1.500v15M14.500 1.500v15M2 3.500h14M2 14.500h14"/>`)}1920 × 1080px</span>
        <label class="pct" for="zoom">100%</label>
        <button aria-label="Zoom out">${icon(18, 18, svg`<path d="M2 9h14"/>`)}</button>
        <input class="slider" id="zoom" type="range" min="0" max="100" .value=${String(this.zoom)} />
        <button aria-label="Zoom in">${icon(18, 18, svg`<path d="M2 9h14M9 2v14"/>`)}</button>
      </footer>
      <task-bar></task-bar>
    `;
  }
}
